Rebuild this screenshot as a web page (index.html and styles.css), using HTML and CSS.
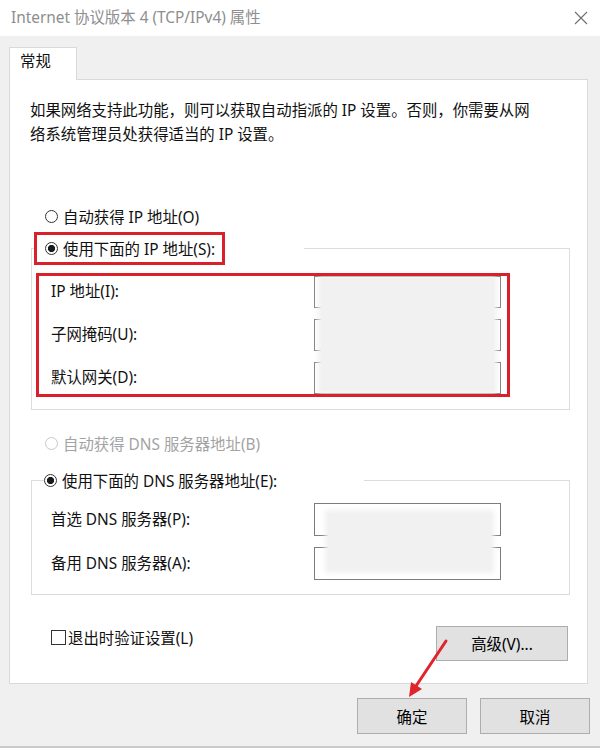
FILE: index.html
```html
<!DOCTYPE html>
<html lang="zh-CN">
<head>
	<meta charset="UTF-8">
	<title>Internet 协议版本 4 (TCP/IPv4) 属性</title>
	<link rel="stylesheet" href="styles.css">
</head>
<body>
	<div class="window">
		<div class="titlebar">
			<span class="title">Internet 协议版本 4 (TCP/IPv4) 属性</span>
			<svg class="close" width="14" height="14" viewBox="0 0 14 14"><path d="M1 1L13 13M13 1L1 13" stroke="#6e6e6e" stroke-width="1.1" fill="none"/></svg>
		</div>
		<div class="main">
			<div class="tabs"><span class="tab">常规</span></div>
			<div class="panel">
				<p class="desc">如果网络支持此功能，则可以获取自动指派的 IP 设置。否则，你需要从网<br>络系统管理员处获得适当的 IP 设置。</p>

				<div class="option"><span class="radio"></span>自动获得 IP 地址(O)</div>
				<fieldset class="group">
					<legend class="legend-ip"><span class="mark"><span class="radio checked"></span>使用下面的 IP 地址(S):</span></legend>
					<div class="fields fields-ip">
						<label>IP 地址(I):</label><span class="field"></span>
						<label>子网掩码(U):</label><span class="field"></span>
						<label>默认网关(D):</label><span class="field"></span>
						<span class="blur blur-ip"></span>
					</div>
				</fieldset>

				<div class="option option-gap disabled"><span class="radio"></span>自动获得 DNS 服务器地址(B)</div>
				<fieldset class="group group-dns">
					<legend class="legend-dns"><span class="radio checked"></span>使用下面的 DNS 服务器地址(E):</legend>
					<div class="fields fields-dns">
						<label>首选 DNS 服务器(P):</label><span class="field"></span>
						<label>备用 DNS 服务器(A):</label><span class="field"></span>
						<span class="blur blur-dns"></span>
					</div>
				</fieldset>

				<div class="panel-foot">
					<label class="check"><span class="box"></span>退出时验证设置(L)</label>
					<button class="btn btn-adv">高级(V)...</button>
				</div>
			</div>
			<div class="footer">
				<button class="btn">确定</button>
				<button class="btn">取消</button>
			</div>
		</div>
		<svg class="arrow" width="600" height="750" viewBox="0 0 600 750">
			<line x1="446" y1="641" x2="416" y2="686" stroke="#e0232c" stroke-width="3" stroke-linecap="round"/>
			<polygon points="409,697 422,689 411,682" fill="#e0232c"/>
		</svg>
	</div>
</body>
</html>
```

FILE: styles.css
```css
*{box-sizing: border-box;}
body{
	margin: 0;
	background: #fff;
	font-family: "Noto Sans", "Noto Sans CJK SC", sans-serif;
	font-size: 15.4px;
	color: #111;
}
.window{
	position: relative;
	width: 600px;
	height: 748px;
	background: #f0f0f0;
	border-bottom: 2px solid #cacaca;
}
.titlebar{
	height: 36px;
	background: #fff;
	display: flex;
	align-items: center;
	justify-content: space-between;
	padding: 0 12px 0 11px;
}
.title{color: #8e8e8e; line-height: 20px;}
.main{padding: 11px 12px 0 9px;}
.tabs{display: flex;}
.tab{
	position: relative;
	z-index: 1;
	display: block;
	width: 68px;
	height: 33px;
	margin-bottom: -1px;
	padding: 4px 0 0 10px;
	line-height: 20px;
	background: #fff;
	border: 1px solid #d9d9d9;
	border-bottom: 0;
}
.panel{
	width: 579px;
	height: 605px;
	background: #fff;
	border: 1px solid #d9d9d9;
}
.desc{
	margin: 19px 0 0 20px;
	line-height: 24px;
}
.option{
	display: flex;
	align-items: center;
	height: 20px;
	margin: 59px 0 0 35px;
}
.option-gap{margin-top: 23px;}
.disabled{color: #a3a3a3;}
.radio{
	display: inline-block;
	width: 13px;
	height: 13px;
	margin-right: 5px;
	border: 1px solid #333;
	border-radius: 50%;
	flex: none;
}
.disabled .radio{border-color: #c8c8c8;}
.radio.checked{background: radial-gradient(circle, #1a1a1a 0 3.3px, transparent 3.9px);}
.group{
	width: 539px;
	margin: 6px 0 0 21px;
	padding: 0 0 12px;
	border: 1px solid #dcdcdc;
	min-width: 0;
}
.group-dns{margin-top: 17px; padding-bottom: 14px;}
.legend-ip{
	width: 270px;
	margin: 0 0 5px 2px;
	padding: 0;
}
.mark{
	display: inline-flex;
	align-items: center;
	height: 33px;
	padding: 0 7px 0 8px;
	border: 3px solid #d8212b;
}
.legend-dns{
	display: flex;
	align-items: center;
	width: 320px;
	height: 20px;
	margin-left: 12px;
	padding: 0;
}
.fields{
	position: relative;
	overflow: hidden;
	display: grid;
	grid-template-columns: 263px 187px;
	row-gap: 11px;
	align-items: center;
}
.fields-ip{
	width: 474px;
	margin: 3px 0 0 4px;
	padding-left: 12px;
	grid-auto-rows: 32px;
	border: 3px solid #d8212b;
}
.fields-dns{
	width: 470px;
	margin: 13px 0 0 19px;
	grid-auto-rows: 33px;
}
.fields label{line-height: 20px;}
.field{
	align-self: stretch;
	border: 1px solid #7c7c7c;
	background: #fff;
}
.blur{
	position: absolute;
	background: #f1f1f1;
	box-shadow: 0 0 5px 3px #f1f1f1;
}
.blur-ip{left: 282px; width: 173px; top: 3px; bottom: 3px;}
.blur-dns{left: 277px; width: 163px; top: 10px; height: 57px;}
.panel-foot{
	display: flex;
	justify-content: space-between;
	align-items: flex-start;
	margin: 31px 19px 0 41px;
}
.check{
	display: flex;
	align-items: center;
	height: 20px;
	margin-top: 1px;
}
.box{
	width: 15px;
	height: 15px;
	margin-right: 2px;
	border: 1px solid #333;
}
.btn{
	height: 36px;
	width: 110px;
	font: inherit;
	color: #000;
	background: #e1e1e1;
	border: 1px solid #adadad;
	padding: 0;
}
.btn-adv{width: 132px; height: 35px;}
.footer{
	display: flex;
	justify-content: flex-end;
	gap: 13px;
	margin: 14px -2px 0 0;
}
.arrow{
	position: absolute;
	top: 0;
	left: 0;
	pointer-events: none;
}
```
